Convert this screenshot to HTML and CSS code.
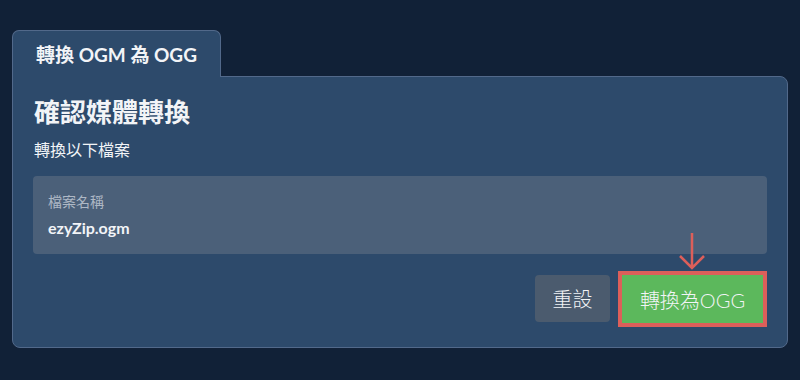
FILE: index.html
```html
<!DOCTYPE html>
<html lang="zh-Hant">
<head>
  <meta charset="UTF-8">
  <title>轉換 OGM 為 OGG</title>
  <link rel="stylesheet" href="styles.css">
</head>
<body>
<div class="wrap">
  <div class="tab">轉換 OGM 為 OGG</div>
  <div class="panel">
    <h2>確認媒體轉換</h2>
    <p class="sub">轉換以下檔案</p>
    <div class="file-box">
      <div class="file-label">檔案名稱</div>
      <div class="file-name">ezyZip.ogm</div>
    </div>
    <div class="actions">
      <button type="button" class="btn reset">重設</button>
      <div class="convert-wrap">
        <svg class="arrow" width="30" height="38" viewBox="0 0 30 38">
          <path d="M15 1 V36 M3 24 L15 36 L27 24" fill="none" stroke="#dc5f5a" stroke-width="2.5"/>
        </svg>
        <button type="button" class="btn convert">轉換為OGG</button>
      </div>
    </div>
  </div>
</div>
</body>
</html>
```
FILE: styles.css
```css
body {
  margin: 0;
  padding: 0;
  background-color: #112137;
  font-family: Lato, "Noto Sans CJK TC", sans-serif;
  color: #f2f4f7;
}
.wrap {
  padding: 30px 12px 0;
}
.tab {
  position: relative;
  z-index: 1;
  display: inline-block;
  box-sizing: border-box;
  width: 209px;
  height: 47px;
  line-height: 48px;
  margin-bottom: -1px;
  text-align: center;
  font-size: 19px;
  font-weight: bold;
  background-color: #2d4a6b;
  border: 1px solid #52698a;
  border-bottom: none;
  border-radius: 7px 7px 0 0;
}
.panel {
  background-color: #2d4a6b;
  border: 1px solid #52698a;
  border-radius: 0 8px 8px 8px;
  padding: 19px 20px 24px;
}
h2 {
  margin: 0 0 0 1px;
  font-size: 26px;
  line-height: 32px;
}
.sub {
  margin: 11px 0 0 1px;
  font-size: 16px;
  line-height: 22px;
}
.file-box {
  margin-top: 15px;
  background-color: #4b6079;
  border-radius: 4px;
  padding: 16px 15px 15px;
}
.file-label {
  font-size: 14px;
  line-height: 20px;
  color: #aeb8c5;
}
.file-name {
  margin-top: 5px;
  font-size: 16px;
  line-height: 22px;
  font-weight: bold;
}
.actions {
  display: flex;
  justify-content: flex-end;
  gap: 12px;
  margin-top: 21px;
  padding-right: 4px;
}
.btn {
  height: 47px;
  border: none;
  border-radius: 4px;
  color: #f2f4f7;
  font-family: Lato, "Noto Sans CJK TC", sans-serif;
  font-size: 20px;
  font-weight: 300;
  cursor: pointer;
}
.reset {
  width: 75px;
  background-color: #4b5b6e;
}
.convert-wrap {
  position: relative;
}
.convert {
  width: 141px;
  height: 48px;
  background-color: #5cb85c;
  border-radius: 0;
  outline: 4px solid #dc5f5a;
  outline-offset: 0;
}
.arrow {
  position: absolute;
  left: 55px;
  top: -43px;
}
```
